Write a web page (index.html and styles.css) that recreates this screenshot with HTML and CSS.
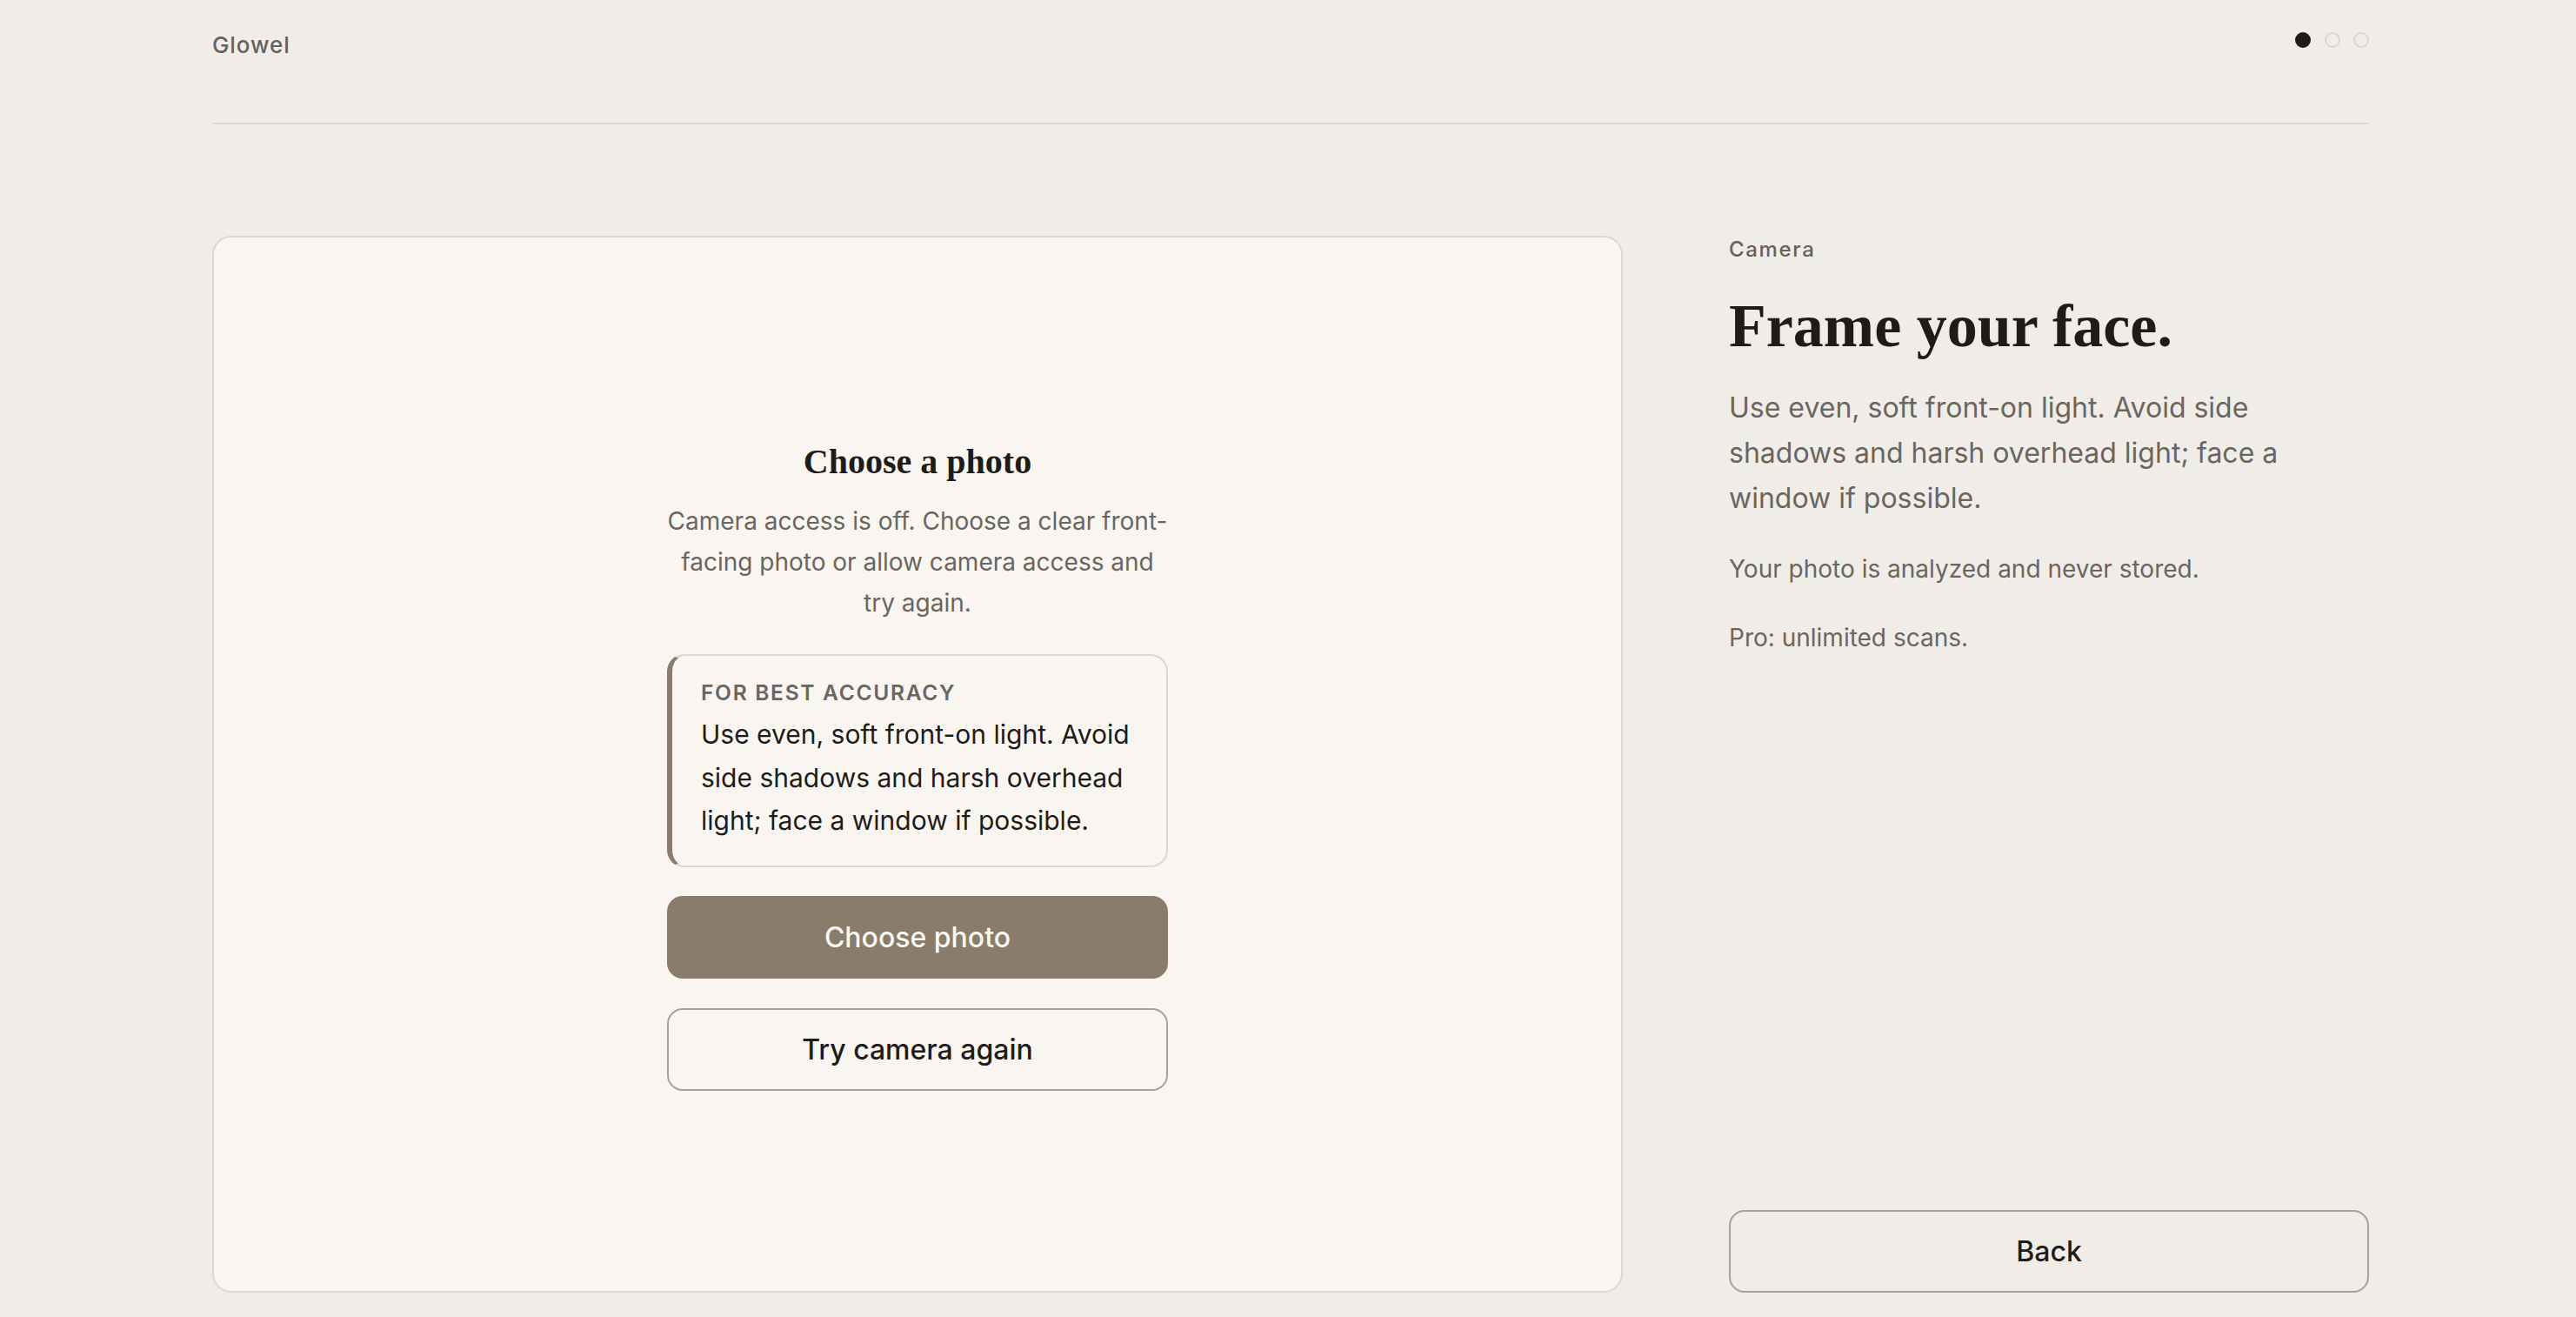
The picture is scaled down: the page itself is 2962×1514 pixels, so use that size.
FILE: index.html
```html
<!DOCTYPE html>
<html lang="en">
<head>
  <meta charset="UTF-8" />
  <meta name="viewport" content="width=device-width, initial-scale=1.0"/>
  <title>Glowel – Camera</title>
  <link rel="stylesheet" href="styles.css">
</head>
<body>

  <div class="page">
    <header class="top-bar">
      <span class="logo">Glowel</span>
      <div class="steps">
        <span class="dot active"></span>
        <span class="dot"></span>
        <span class="dot"></span>
      </div>
    </header>

    <main class="layout">
      <section class="stage">
        <div class="fallback">
          <h2>Choose a photo</h2>
          <p class="fallback-text">Camera access is off. Choose a clear front-facing photo or allow camera access and try again.</p>

          <div class="tip">
            <div class="tip-label">For best accuracy</div>
            <p>Use even, soft front-on light. Avoid side shadows and harsh overhead light; face a window if possible.</p>
          </div>

          <button class="btn primary">Choose photo</button>
          <button class="btn outline">Try camera again</button>
        </div>
      </section>

      <aside class="side">
        <div class="eyebrow">Camera</div>
        <h1>Frame your face.</h1>
        <p class="lead">Use even, soft front-on light. Avoid side shadows and harsh overhead light; face a window if possible.</p>
        <p class="note">Your photo is analyzed and never stored.</p>
        <p class="note">Pro: unlimited scans.</p>

        <button class="btn outline back">Back</button>
      </aside>
    </main>
  </div>

</body>
</html>
```

FILE: styles.css
```css
* {
  box-sizing: border-box;
}

body {
  margin: 0;
  font-family: 'Inter', 'Liberation Sans', sans-serif;
  background-color: #f0ede8;
  color: #1f1c18;
}

.page {
  width: 2480px;
  margin-left: 244px;
  height: 100vh;
  display: flex;
  flex-direction: column;
  padding-bottom: 28px;
}

.top-bar {
  display: flex;
  justify-content: space-between;
  align-items: flex-start;
  flex-shrink: 0;
  height: 143px;
  padding-top: 37px;
  border-bottom: 2px solid #dcd7cf;
}

.logo {
  margin-top: 2px;
  font-size: 26px;
  line-height: 1;
  font-weight: 500;
  letter-spacing: 0.035em;
  color: #66615b;
}

.steps {
  display: flex;
  gap: 15.5px;
}

.dot {
  width: 18px;
  height: 18px;
  border-radius: 50%;
  border: 2px solid #dcd6cd;
}

.dot.active {
  background-color: #1f1c18;
  border-color: #1f1c18;
}

.layout {
  flex: 1;
  display: grid;
  grid-template-columns: 1fr 736px;
  gap: 122px;
  margin-top: 128px;
}

/* left: camera stage */
.stage {
  background-color: #f9f6f1;
  border: 2px solid #dcd7cf;
  border-radius: 22px;
  display: flex;
  align-items: center;
  justify-content: center;
}

.fallback {
  width: 576px;
  padding-top: 4px;
  text-align: center;
  display: flex;
  flex-direction: column;
}

.fallback h2 {
  margin: 0;
  font-family: 'Liberation Serif', serif;
  font-size: 40px;
  line-height: 1.2;
  font-weight: 700;
  color: #1f1c18;
}

.fallback-text {
  margin: 21px 0 0;
  font-size: 28px;
  line-height: 47px;
  color: #6b6560;
}

.tip {
  margin-top: 35px;
  text-align: left;
  border: 2px solid #dcd7cf;
  border-left: 6px solid #8a7c6a;
  border-radius: 20px;
  padding: 25px 30px 26px 33px;
}

.tip-label {
  font-size: 24.5px;
  line-height: 1.4;
  font-weight: 600;
  letter-spacing: 0.07em;
  text-transform: uppercase;
  color: #6b6560;
  margin-bottom: 7px;
}

.tip p {
  margin: 0;
  font-size: 30px;
  line-height: 49.5px;
  color: #1f1c18;
}

.btn {
  height: 95px;
  width: 100%;
  border-radius: 18px;
  font-family: inherit;
  font-size: 32px;
  font-weight: 500;
  cursor: pointer;
}

.btn.primary {
  margin-top: 33px;
  background-color: #8a7c6a;
  border: none;
  color: #fbf8f3;
}

.btn.outline {
  margin-top: 34px;
  background: transparent;
  border: 2px solid #aba294;
  color: #1f1c18;
}

/* right: copy */
.side {
  display: flex;
  flex-direction: column;
  padding-top: 2px;
}

.eyebrow {
  font-size: 24px;
  line-height: 1.2;
  font-weight: 500;
  letter-spacing: 0.07em;
  color: #66615b;
}

.side h1 {
  margin: 34px 0 0;
  font-family: 'Liberation Serif', serif;
  font-size: 70px;
  line-height: 1.1;
  font-weight: 700;
  color: #1f1c18;
}

.lead {
  margin: 30px 0 0;
  max-width: 660px;
  font-size: 32px;
  line-height: 52px;
  color: #6b6560;
}

.note {
  margin: 32px 0 0;
  font-size: 28px;
  line-height: 1.7;
  color: #6b6560;
}

.note + .note {
  margin-top: 32px;
}

.btn.back {
  margin-top: auto;
}
```
